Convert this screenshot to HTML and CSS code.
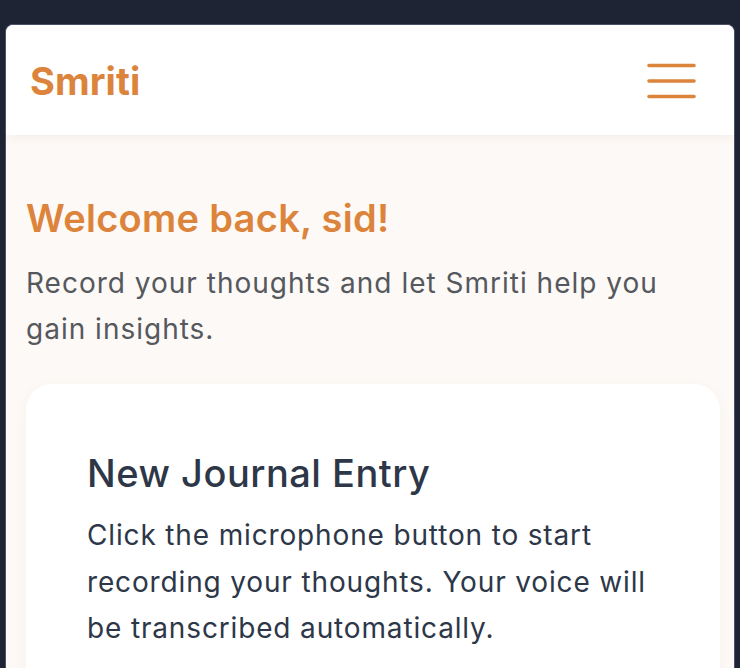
FILE: index.html
```html
<!DOCTYPE html>
<html lang="en">
<head>
<meta charset="utf-8">
<title>Smriti</title>
<link rel="stylesheet" href="styles.css">
</head>
<body>
<div class="frame">
  <header class="topbar">
    <span class="logo">Smriti</span>
    <button class="menu" aria-label="Menu">
      <svg width="50" height="36" viewBox="0 0 50 36">
        <path d="M2 2.5H47M2 18H47M2 33.5H47" stroke="#dc843b" stroke-width="3.6" stroke-linecap="round" fill="none"/>
      </svg>
    </button>
  </header>
  <main class="content">
    <h1 class="welcome">Welcome back, sid!</h1>
    <p class="lead">Record your thoughts and let Smriti help you gain insights.</p>
    <section class="card">
      <h2 class="card-title">New Journal Entry</h2>
      <p class="card-text">Click the microphone button to start recording your thoughts. Your voice will be transcribed automatically.</p>
    </section>
  </main>
</div>
</body>
</html>
```

FILE: styles.css
```css
html, body {
  margin: 0;
  padding: 0;
  height: 100%;
  overflow: hidden;
}
body {
  background: #1e2434;
  padding: 24px 5px 0 5px;
  box-sizing: border-box;
  font-family: Inter, "Noto Sans", sans-serif;
}
.frame {
  height: 700px;
  border: 1.5px solid #4b5166;
  border-bottom: none;
  border-radius: 8px 8px 0 0;
  background: #fdf9f6;
  overflow: hidden;
}
.topbar {
  height: 110px;
  background: #ffffff;
  display: flex;
  align-items: center;
  justify-content: space-between;
  padding: 0 37px 0 24px;
  box-shadow: 0 2px 10px rgba(120, 90, 60, 0.07);
  position: relative;
}
.logo {
  font-family: Inter, sans-serif;
  font-weight: 700;
  font-size: 38px;
  letter-spacing: 0.1px;
  color: #dc843b;
  line-height: 1;
  margin-top: 2px;
}
.menu {
  border: 0;
  background: none;
  padding: 0;
  display: flex;
  margin-top: 1px;
}
.content {
  padding: 60px 14px 0 20px;
}
.welcome {
  margin: 0;
  font-size: 38px;
  line-height: 46px;
  font-weight: 600;
  color: #dc843b;
  letter-spacing: 0.3px;
}
.lead {
  margin: 19px 0 0 0;
  font-size: 28px;
  line-height: 46px;
  color: #55585d;
  font-weight: 400;
  letter-spacing: 1px;
}
.card {
  margin-top: 32px;
  background: #ffffff;
  border-radius: 26px;
  padding: 66px 61px 40px 61px;
  box-shadow: 0 4px 14px rgba(120, 90, 60, 0.05);
}
.card-title {
  margin: 0;
  font-size: 38px;
  line-height: 46px;
  font-weight: 500;
  color: #2d3748;
  letter-spacing: 0.5px;
}
.card-text {
  margin: 16px 0 0 0;
  font-size: 28px;
  line-height: 46.5px;
  color: #2d3748;
  letter-spacing: 0.85px;
}
```
